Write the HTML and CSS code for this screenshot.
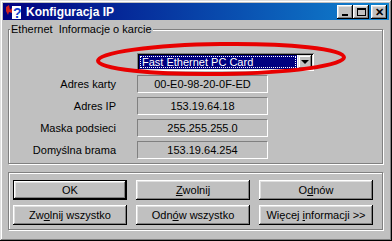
FILE: index.html
```html
<!DOCTYPE html>
<html lang="pl">
<head>
    <meta charset="UTF-8">
    <title>Konfiguracja IP</title>
    <link rel="stylesheet" href="styles.css">
</head>
<body>
    <div class="window">
        <div class="titlebar">
            <svg class="app-icon" width="16" height="16" viewBox="0 0 16 16">
                <path d="M1 3 L4 1 L5 6 L7 4 L7 9 L4 8 L3 11 L1 7 Z" fill="#d02020"/>
                <rect x="7" y="2" width="9" height="13" fill="#ffffff"/>
                <text x="8" y="14" font-family="Liberation Sans, sans-serif" font-weight="bold" font-size="14" fill="#1040d0">?</text>
            </svg>
            <span class="title">Konfiguracja IP</span>
            <div class="controls">
                <span class="ctl"><i class="min"></i></span>
                <span class="ctl"><i class="max"></i></span>
                <span class="ctl close">✕</span>
            </div>
        </div>

        <fieldset class="group">
            <legend>Ethernet&nbsp; Informacje o karcie</legend>
            <div class="form">
                <span></span>
                <div class="combo">
                    <span class="combo-value"><span class="focus">Fast Ethernet PC Card</span></span>
                    <span class="combo-btn"><i></i></span>
                </div>
                <label>Adres karty</label>
                <div class="field">00-E0-98-20-0F-ED</div>
                <label>Adres IP</label>
                <div class="field">153.19.64.18</div>
                <label>Maska podsieci</label>
                <div class="field">255.255.255.0</div>
                <label>Domyślna brama</label>
                <div class="field">153.19.64.254</div>
            </div>
        </fieldset>

        <div class="actions">
            <button class="btn default">OK</button>
            <button class="btn"><u>Z</u>wolnij</button>
            <button class="btn">O<u>d</u>nów</button>
            <button class="btn">Zw<u>o</u>lnij wszystko</button>
            <button class="btn">Odn<u>ó</u>w wszystko</button>
            <button class="btn">Więcej <u>i</u>nformacji &gt;&gt;</button>
        </div>

        <svg class="mark" width="392" height="241" viewBox="0 0 392 241">
            <ellipse cx="221" cy="59" rx="123" ry="15" transform="rotate(-0.8 221 59)" fill="none" stroke="#e80000" stroke-width="4"/>
        </svg>
    </div>
</body>
</html>
```

FILE: styles.css
```css
body {
    margin: 0;
    padding: 0;
    background: #c0c0c0;
    font-family: "Liberation Sans", Arial, sans-serif;
    font-size: 11px;
    color: #000;
}

.window {
    position: relative;
    width: 392px;
    height: 241px;
    box-sizing: border-box;
    padding: 3px;
    background: #c0c0c0;
    box-shadow: inset -1px -1px #000, inset 1px 1px #dfdfdf, inset -2px -2px #808080, inset 2px 2px #fff;
    overflow: hidden;
}

.titlebar {
    height: 17px;
    display: flex;
    align-items: center;
    padding: 0 2px 0 2px;
    background: linear-gradient(to right, #000080, #1084d0);
    color: #fff;
}

.app-icon {
    flex: none;
    margin-right: 5px;
}

.title {
    font-weight: bold;
    font-size: 12px;
    flex: 1;
}

.controls {
    display: flex;
    align-items: center;
}

.ctl {
    width: 16px;
    height: 14px;
    box-sizing: border-box;
    background: #c0c0c0;
    box-shadow: inset -1px -1px #000, inset 1px 1px #fff, inset -2px -2px #808080, inset 2px 2px #dfdfdf;
    display: flex;
    align-items: center;
    justify-content: center;
    color: #000;
}

.ctl.close {
    margin-left: 2px;
    font-size: 11px;
    font-weight: bold;
    line-height: 14px;
}

.ctl .min {
    width: 6px;
    height: 2px;
    background: #000;
    margin-top: 6px;
    margin-right: 1px;
}

.ctl .max {
    width: 9px;
    height: 8px;
    box-sizing: border-box;
    border: 1px solid #000;
    border-top-width: 2px;
}

.group {
    margin: 3px 6px 0 5px;
    padding: 0 0 4px 0;
    border: 1px solid #808080;
    box-shadow: inset 1px 1px #fff, 1px 1px #fff;
    min-width: 0;
}

.group legend {
    padding: 0 1px;
    margin-left: 1px;
    line-height: 13px;
    background: #c0c0c0;
    position: relative;
}

.form {
    display: grid;
    grid-template-columns: 107px 177px;
    grid-auto-rows: 18px;
    column-gap: 21px;
    row-gap: 4px;
    margin-top: 17px;
}

.form label {
    text-align: right;
    line-height: 18px;
}

.field {
    width: 131px;
    box-sizing: border-box;
    border-top: 1px solid #808080;
    border-left: 1px solid #808080;
    border-right: 1px solid #fff;
    border-bottom: 1px solid #fff;
    text-align: center;
    line-height: 16px;
}

.combo {
    display: flex;
    box-sizing: border-box;
    padding: 2px;
    background: #fff;
    box-shadow: inset 1px 1px #808080, inset -1px -1px #fff, inset 2px 2px #000, inset -2px -2px #dfdfdf;
}

.combo-value {
    flex: 1;
    background: #000080;
    color: #fff;
    padding: 1px;
    display: flex;
}

.combo-value .focus {
    flex: 1;
    outline: 1px dotted #fff;
    outline-offset: -1px;
    padding-left: 2px;
    line-height: 12px;
}

.combo-btn {
    width: 14px;
    margin-left: 1px;
    background: #c0c0c0;
    box-shadow: inset -1px -1px #000, inset 1px 1px #dfdfdf, inset -2px -2px #808080, inset 2px 2px #fff;
    display: flex;
    align-items: center;
    justify-content: center;
}

.combo-btn i {
    width: 0;
    height: 0;
    border-left: 4px solid transparent;
    border-right: 4px solid transparent;
    border-top: 4px solid #000;
}

.actions {
    margin: 8px 6px 0 5px;
    padding: 7px 0 4px 4px;
    border: 1px solid #808080;
    box-shadow: inset 1px 1px #fff, 1px 1px #fff;
    display: grid;
    grid-template-columns: repeat(3, 114px);
    grid-auto-rows: 20px;
    column-gap: 9px;
    row-gap: 5px;
}

.btn {
    font-family: "Liberation Sans", Arial, sans-serif;
    font-size: 11px;
    color: #000;
    background: #c0c0c0;
    border: none;
    padding: 0;
    margin: 0;
    box-shadow: inset -1px -1px #000, inset 1px 1px #fff, inset -2px -2px #808080, inset 2px 2px #dfdfdf;
}

.btn.default {
    box-shadow: inset 0 0 0 1px #000, inset -2px -2px #000, inset 2px 2px #fff, inset -3px -3px #808080, inset 3px 3px #dfdfdf;
}

.mark {
    position: absolute;
    left: 0;
    top: 0;
    pointer-events: none;
}
```
